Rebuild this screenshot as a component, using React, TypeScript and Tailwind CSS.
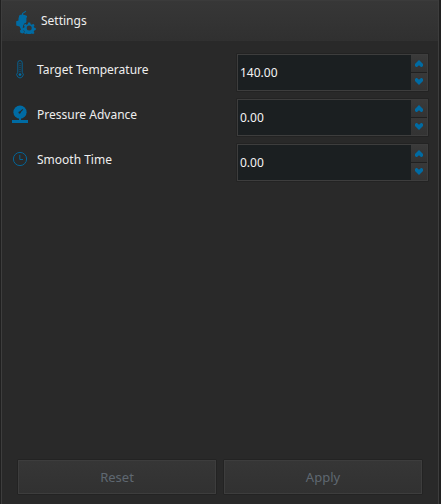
import React from 'react';

const INK = '#006ba3';

function NozzleGearIcon() {
  return (
    <svg width="20" height="24" viewBox="0 0 20 24" fill={INK}>
      <path d="M6.5 5V3.6C6.5 2.4 8.8 3 9.8 1" fill="none" stroke={INK} strokeWidth="1.1" />
      <path d="M3 5.8Q4 4.5 6.5 4.5T11 6V7.4h-.6V12.6L8 14 6.8 18 8.6 21.8 7 23.6 4.6 23 3.8 20.8 5 19.4 3.6 16.5.2 15.6V11.2L2.5 10.6V7.4H3Z" />
      <circle cx="13.2" cy="18" r="6.3" fill="#343434" />
      <path d="M12.2 12.5h2l.4 1.7 1.3.5 1.3-.9 1.4 1.4-.9 1.3.5 1.3 1.5.3v2l-1.5.3-.5 1.3.8 1.2-1.4 1.2-1.2-.7-1.3.5-.4 1.6h-2l-.4-1.6-1.3-.5-1.3.7-1.3-1.2.8-1.2-.6-1.3-1.5-.3v-2l1.5-.3.5-1.3-.8-1.3 1.4-1.4 1.3.9 1.2-.5Z" />
      <circle cx="13.2" cy="18" r="2.5" fill="#343434" />
    </svg>
  );
}

function ThermometerIcon() {
  return (
    <svg width="16" height="20" viewBox="0 0 16 20" fill="none" stroke={INK}>
      <path d="M5.8 12.3V2.8Q5.8.6 8 .6t2.2 2.2v9.5a3.2 3.2 0 1 1-4.4 0Z" strokeWidth=".85" />
      <path d="M8 3v10" strokeWidth=".85" strokeDasharray="1.2 .8" />
      <circle cx="8" cy="14.6" r="1.4" fill={INK} stroke="none" />
    </svg>
  );
}

function GaugeIcon() {
  return (
    <svg width="16" height="20" viewBox="0 0 16 20">
      <circle cx="8" cy="7.2" r="6.6" fill={INK} />
      <path d="M7 13h2v3H7zM0 15h16v3H0z" fill={INK} />
      <path d="m7.5 7.7 3.3-3.3" stroke="#292929" strokeWidth="1.1" />
      <circle cx="7.6" cy="7.6" r="1.15" fill="#292929" />
    </svg>
  );
}

function ClockIcon() {
  return (
    <svg width="16" height="20" viewBox="0 0 16 20" fill="none" stroke={INK}>
      <circle cx="8" cy="9" r="6.6" strokeWidth=".9" />
      <path d="M7.8 4.8v4.7H11" strokeWidth=".9" />
    </svg>
  );
}

function Arrow({ down = false }: { down?: boolean }) {
  return (
    <svg width="8" height="7" viewBox="0 0 8 7" className={down ? 'rotate-180' : ''}>
      <path d="M4 0 8 4V6L6.9 7H6L4 5.2 2 7H1.1L0 6V4Z" fill={INK} />
    </svg>
  );
}

function Setting({ icon, label, initial }: { icon: React.ReactNode; label: string; initial: number }) {
  const [value, setValue] = React.useState(initial);
  return (
    <div className="flex h-[39px] items-start">
      <div className="flex w-[25px] items-center pt-[7px]">{icon}</div>
      <span className="w-[199px] pt-[7px] leading-5">{label}</span>
      <div className="h-[39px] w-[193px] rounded-[1px] border border-[#232323]">
        <div className="flex h-full border border-[#3d3d3d] bg-[#1b1f21]">
          <span className="flex-1 pl-[2px] pt-2 leading-5 text-[#f4f4f4]">{value.toFixed(2)}</span>
          <div className="flex w-4 flex-col gap-px bg-[#202020]">
            <button aria-label={`Increase ${label}`} onClick={() => setValue(value + 1)} className="flex h-[17px] items-center justify-center bg-linear-to-b from-[#3a3a3a] to-[#333333]">
              <Arrow />
            </button>
            <button aria-label={`Decrease ${label}`} onClick={() => setValue(value - 1)} className="flex h-[17px] items-center justify-center bg-linear-to-b from-[#393939] to-[#333333]">
              <Arrow down />
            </button>
          </div>
        </div>
      </div>
    </div>
  );
}

function ActionButton({ children }: { children: React.ReactNode }) {
  return (
    <button disabled className="h-9 flex-1 rounded-[2px] border border-[#232323] text-[13px] text-[#5f6871]">
      <span className="flex h-full items-center justify-center border border-[#3d3d3d] bg-linear-to-b from-[#363636] to-[#313131] pt-[2px]">{children}</span>
    </button>
  );
}

export default function App() {
  return (
    <div className="h-[504px] w-[441px] bg-[#202020] pl-px pr-[2px] font-['Noto_Sans',sans-serif] text-[12px] text-[#eeeeee]">
      <div className="flex h-full flex-col border-x border-[#3d3d3d] bg-[#292929]">
        <header className="flex h-[41px] shrink-0 items-start border-t border-[#3b3b3b] bg-linear-to-b from-[#373737] to-[#303030] pl-[14px]">
          <div className="pt-[9px]"><NozzleGearIcon /></div>
          <h1 className="pl-[5px] pt-[10px] leading-5">Settings</h1>
        </header>
        <main className="flex flex-col gap-[6px] pl-[10px] pt-3">
          <Setting icon={<ThermometerIcon />} label="Target Temperature" initial={140} />
          <Setting icon={<GaugeIcon />} label="Pressure Advance" initial={0} />
          <Setting icon={<ClockIcon />} label="Smooth Time" initial={0} />
        </main>
        <footer className="mt-auto flex gap-[6px] pb-[9px] pl-[15px] pr-[15px]">
          <ActionButton>Reset</ActionButton>
          <ActionButton>Apply</ActionButton>
        </footer>
      </div>
    </div>
  );
}
